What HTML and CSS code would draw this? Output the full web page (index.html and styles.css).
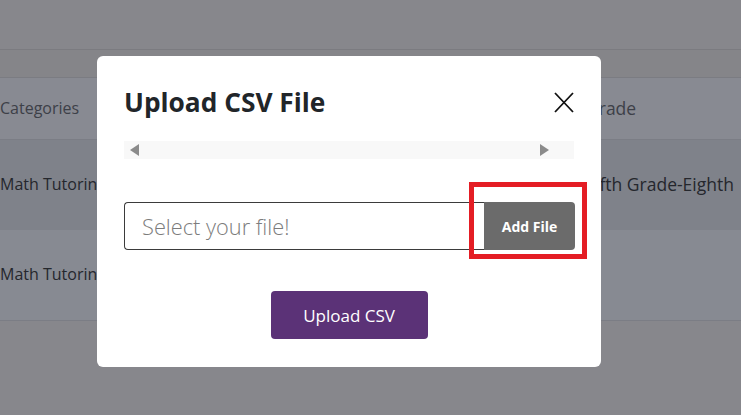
FILE: index.html
```html
<!DOCTYPE html>
<html lang="en">
<head>
<meta charset="utf-8">
<title>Upload CSV File</title>
<link rel="stylesheet" href="styles.css">
</head>
<body>
<div class="page">
  <div class="topbar"></div>
  <div class="subbar"></div>
  <div class="table">
    <div class="row head">
      <div class="cell c1">Categories</div>
      <div class="cell c2">Grade</div>
    </div>
    <div class="row r1">
      <div class="cell c1">Math Tutoring</div>
      <div class="cell c2">Fifth Grade-Eighth</div>
    </div>
    <div class="row r2">
      <div class="cell c1">Math Tutoring</div>
      <div class="cell c2"></div>
    </div>
  </div>
</div>

<div class="modal">
  <div class="modal-header">
    <h2 class="modal-title">Upload CSV File</h2>
    <button class="close" aria-label="Close">
      <svg width="20" height="21" viewBox="0 0 20 21"><path d="M1 1 L19 20 M19 1 L1 20" stroke="#111" stroke-width="1.8" fill="none"/></svg>
    </button>
  </div>
  <div class="hscroll">
    <span class="arrow left"></span>
    <span class="arrow right"></span>
  </div>
  <div class="input-group">
    <input class="file-input" type="text" placeholder="Select your file!">
    <button class="add-btn">Add File</button>
  </div>
  <button class="upload-btn">Upload CSV</button>
</div>
<div class="highlight"></div>
</body>
</html>
```

FILE: styles.css
```css
html, body {
  margin: 0;
  padding: 0;
}
body {
  width: 741px;
  height: 415px;
  overflow: hidden;
  background: #87878c;
  font-family: "Open Sans", "Liberation Sans", sans-serif;
  position: relative;
}
.page {
  display: flex;
  flex-direction: column;
}
.topbar {
  height: 49px;
  border-bottom: 1px solid #7b7b80;
}
.subbar {
  height: 27px;
  background: #858589;
  border-bottom: 1px solid #7b7c82;
}
.table {
  display: flex;
  flex-direction: column;
}
.row {
  display: grid;
  grid-template-columns: 587px 1fr;
  align-items: center;
  font-size: 16px;
  white-space: nowrap;
  overflow: hidden;
}
.row.head {
  height: 61px;
  background: #888a92;
  color: #3d4048;
  border-bottom: 1px solid #7b7d85;
}
.row.r1 {
  height: 90px;
  background: #7f828a;
  color: #25272d;
}
.row.r2 {
  height: 90px;
  background: #878a92;
  color: #25272d;
  border-bottom: 1px solid #7b7d85;
}
.cell {
  padding-bottom: 2px;
}
.c2 {
  font-size: 17.5px;
  margin-left: -1px;
}

.modal {
  position: absolute;
  left: 97px;
  top: 56px;
  width: 504px;
  height: 311px;
  box-sizing: border-box;
  background: #fff;
  border-radius: 6px;
  padding: 27px 26px 28px 27px;
  display: flex;
  flex-direction: column;
}
.modal-header {
  display: flex;
  justify-content: space-between;
  align-items: center;
  height: 38px;
}
.modal-title {
  margin: 0;
  font-size: 26.3px;
  font-weight: 700;
  color: #212529;
  line-height: 38px;
}
.close {
  border: 0;
  background: none;
  padding: 0;
  margin-right: 1px;
  width: 20px;
  height: 21px;
  display: flex;
}
.hscroll {
  margin-top: 20px;
  height: 18px;
  width: 450px;
  background: #f8f8f8;
  display: flex;
  align-items: center;
  justify-content: space-between;
  padding: 0 25px 0 6px;
  box-sizing: border-box;
}
.arrow {
  width: 0;
  height: 0;
  border-top: 6px solid transparent;
  border-bottom: 6px solid transparent;
}
.arrow.left {
  border-right: 9px solid #8b8b8b;
}
.arrow.right {
  border-left: 9px solid #8b8b8b;
}
.input-group {
  margin-top: 43px;
  display: flex;
  height: 48px;
  width: 451px;
}
.file-input {
  flex: 1;
  min-width: 0;
  box-sizing: border-box;
  height: 48px;
  border: 1px solid #3b3b3b;
  border-right: 0;
  border-radius: 4px 0 0 4px;
  padding: 0 17px;
  font-family: "Open Sans", sans-serif;
  font-weight: 300;
  font-size: 21.8px;
  color: #333;
  outline: none;
}
.file-input::placeholder {
  color: #7c7c7c;
}
.add-btn {
  width: 91px;
  height: 48px;
  border: 0;
  border-radius: 0 4px 4px 0;
  background: #6b6b6b;
  color: #fff;
  font-family: "Open Sans", sans-serif;
  font-weight: 700;
  font-size: 14px;
  padding: 0;
}
.upload-btn {
  margin-top: 41px;
  align-self: center;
  width: 157px;
  height: 48px;
  border: 0;
  border-radius: 4px;
  background: #5b3277;
  color: #fff;
  font-family: "Open Sans", sans-serif;
  font-size: 17px;
  padding: 0;
  margin-left: -1px;
}
.highlight {
  position: absolute;
  left: 469px;
  top: 182px;
  width: 118px;
  height: 77px;
  box-sizing: border-box;
  border: 5px solid #e41d24;
}
```
